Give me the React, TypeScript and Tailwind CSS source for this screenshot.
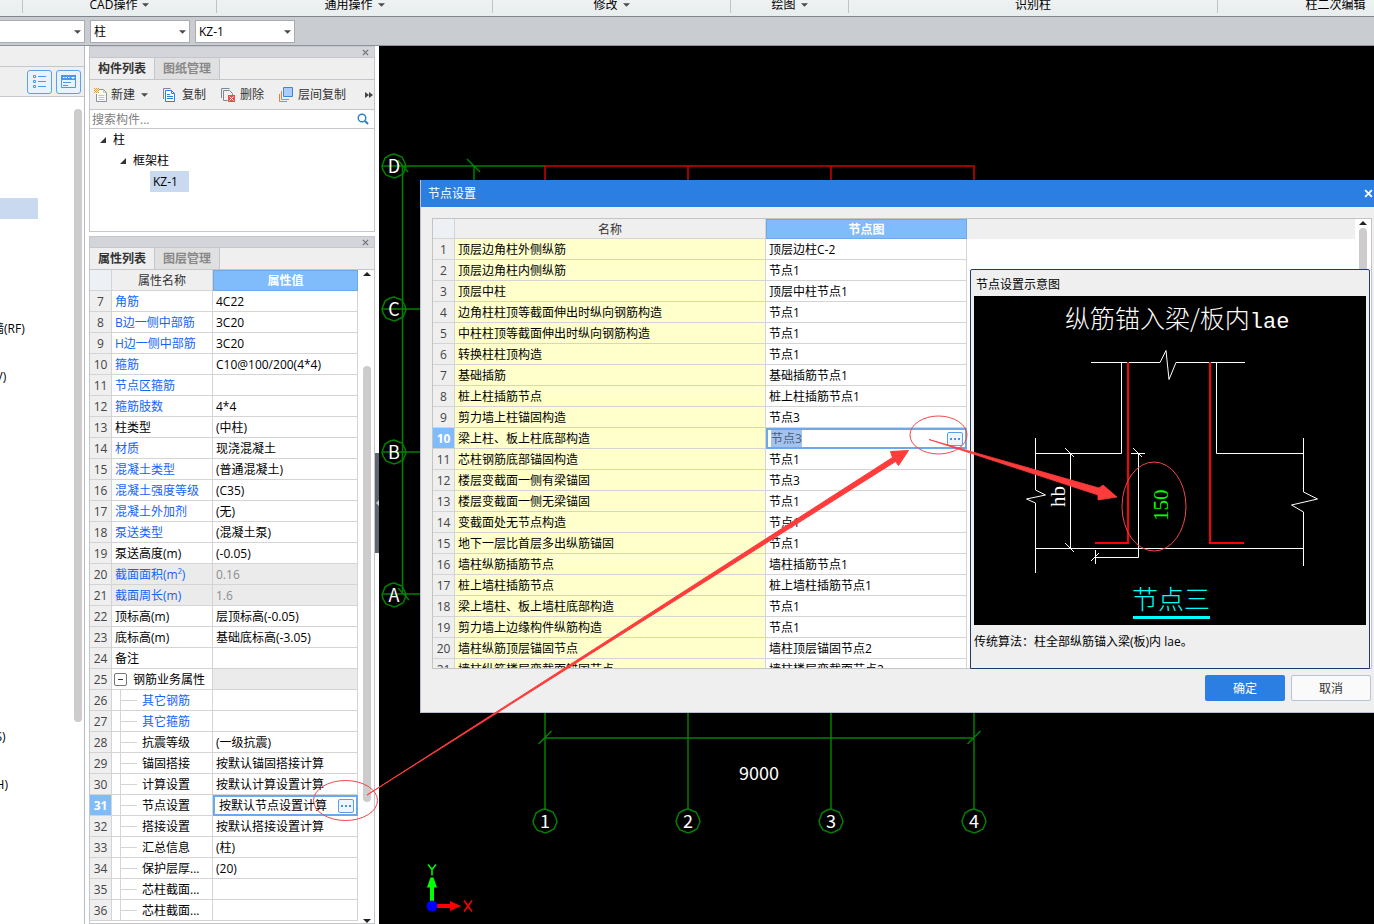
import { ReactNode } from 'react';

type PropRow = {
  no: number;
  name: string;
  value?: string;
  link?: boolean;
  disabled?: boolean;
  group?: boolean;
  child?: boolean;
};

const ribbonGroups = [
  { label: 'CAD操作', menu: true, width: 'w-[194px]' },
  { label: '通用操作', menu: true, width: 'w-[276px]' },
  { label: '修改', menu: true, width: 'w-[238px]' },
  { label: '绘图', menu: true, width: 'w-[118px]' },
  { label: '识别柱', menu: false, width: 'w-[369px]' },
  { label: '柱二次编辑', menu: false, width: 'w-[236px]' },
];

const props: PropRow[] = [
  { no: 7, name: '角筋', value: '4C22', link: true },
  { no: 8, name: 'B边一侧中部筋', value: '3C20', link: true },
  { no: 9, name: 'H边一侧中部筋', value: '3C20', link: true },
  { no: 10, name: '箍筋', value: 'C10@100/200(4*4)', link: true },
  { no: 11, name: '节点区箍筋', link: true },
  { no: 12, name: '箍筋肢数', value: '4*4', link: true },
  { no: 13, name: '柱类型', value: '(中柱)' },
  { no: 14, name: '材质', value: '现浇混凝土', link: true },
  { no: 15, name: '混凝土类型', value: '(普通混凝土)', link: true },
  { no: 16, name: '混凝土强度等级', value: '(C35)', link: true },
  { no: 17, name: '混凝土外加剂', value: '(无)', link: true },
  { no: 18, name: '泵送类型', value: '(混凝土泵)', link: true },
  { no: 19, name: '泵送高度(m)', value: '(-0.05)' },
  { no: 20, name: '截面面积(m²)', value: '0.16', link: true, disabled: true },
  { no: 21, name: '截面周长(m)', value: '1.6', link: true, disabled: true },
  { no: 22, name: '顶标高(m)', value: '层顶标高(-0.05)' },
  { no: 23, name: '底标高(m)', value: '基础底标高(-3.05)' },
  { no: 24, name: '备注' },
  { no: 25, name: '钢筋业务属性', group: true },
  { no: 26, name: '其它钢筋', link: true, child: true },
  { no: 27, name: '其它箍筋', link: true, child: true },
  { no: 28, name: '抗震等级', value: '(一级抗震)', child: true },
  { no: 29, name: '锚固搭接', value: '按默认锚固搭接计算', child: true },
  { no: 30, name: '计算设置', value: '按默认计算设置计算', child: true },
  { no: 31, name: '节点设置', value: '按默认节点设置计算', child: true },
  { no: 32, name: '搭接设置', value: '按默认搭接设置计算', child: true },
  { no: 33, name: '汇总信息', value: '(柱)', child: true },
  { no: 34, name: '保护层厚...', value: '(20)', child: true },
  { no: 35, name: '芯柱截面...', child: true },
  { no: 36, name: '芯柱截面...', child: true },
];

const nodes = [
  ['顶层边角柱外侧纵筋', '顶层边柱C-2'],
  ['顶层边角柱内侧纵筋', '节点1'],
  ['顶层中柱', '顶层中柱节点1'],
  ['边角柱柱顶等截面伸出时纵向钢筋构造', '节点1'],
  ['中柱柱顶等截面伸出时纵向钢筋构造', '节点1'],
  ['转换柱柱顶构造', '节点1'],
  ['基础插筋', '基础插筋节点1'],
  ['桩上柱插筋节点', '桩上柱插筋节点1'],
  ['剪力墙上柱锚固构造', '节点3'],
  ['梁上柱、板上柱底部构造', '节点3'],
  ['芯柱钢筋底部锚固构造', '节点1'],
  ['楼层变截面一侧有梁锚固', '节点3'],
  ['楼层变截面一侧无梁锚固', '节点1'],
  ['变截面处无节点构造', '节点1'],
  ['地下一层比首层多出纵筋锚固', '节点1'],
  ['墙柱纵筋插筋节点', '墙柱插筋节点1'],
  ['桩上墙柱插筋节点', '桩上墙柱插筋节点1'],
  ['梁上墙柱、板上墙柱底部构造', '节点1'],
  ['剪力墙上边缘构件纵筋构造', '节点1'],
  ['墙柱纵筋顶层锚固节点', '墙柱顶层锚固节点2'],
  ['墙柱纵筋楼层变截面锚固节点', '墙柱楼层变截面节点2'],
];

// 24px rows, only the tail of each label fits in the collapsed navigator
const navTails: Record<number, string> = {
  9: '墙(RF)',
  11: '(V)',
  26: '(S)',
  28: '(H)',
};

const Caret = ({ className = '' }: { className?: string }) => (
  <svg viewBox="0 0 8 4" className={`w-[7px] h-1 shrink-0 ${className}`}>
    <path d="M0 0h8L4 4z" fill="#4a4a4a" />
  </svg>
);

const Close = ({ color, className }: { color: string; className: string }) => (
  <svg viewBox="0 0 8 8" className={className}>
    <path d="M1 1l6 6M7 1L1 7" stroke={color} strokeWidth="1.6" />
  </svg>
);

const Combo = ({ label, value, className }: { label: string; value: string; className: string }) => (
  <div className={`relative h-[23px] shrink-0 ${className}`}>
    <select
      aria-label={label}
      className="w-full h-full pl-[3px] pt-[2px] appearance-none border border-[#a9abb0] bg-white text-xs text-black"
    >
      <option>{value}</option>
    </select>
    <Caret className="absolute right-1 top-[10px] pointer-events-none" />
  </div>
);

const Ellipsis = () => (
  <button
    aria-label="更多"
    className="flex items-center justify-center w-4 h-[14px] shrink-0 rounded-xs border border-[#5b9fe0] bg-[#eef5fd]"
  >
    <svg viewBox="0 0 10 2" className="w-[10px] h-[2px]">
      <path d="M0 0h2v2H0zM4 0h2v2H4zM8 0h2v2H8z" fill="#4a93dc" />
    </svg>
  </button>
);

const PanelHead = ({ tabs }: { tabs: string[] }) => (
  <>
    <div className="flex items-center justify-end h-[11px] pr-[5px] bg-[#d3d5da] border-b border-[#c3c6cb]">
      <button aria-label="关闭" className="flex">
        <Close color="#777" className="w-[7px] h-[7px]" />
      </button>
    </div>
    <div className="flex h-[22px] bg-[#efefef] border-b border-[#c3c6cb]">
      <button className="w-[65px] pt-px font-bold text-[#333] border-r border-[#c3c6cb]">{tabs[0]}</button>
      <button className="w-[65px] pt-px font-bold text-[#888] bg-[#e0e0e0] border-r border-[#c3c6cb]">{tabs[1]}</button>
    </div>
  </>
);

const Tool = ({ label, children }: { label: string; children: ReactNode }) => (
  <button className="flex items-center gap-1 text-[#333] whitespace-nowrap">
    <svg viewBox="0 0 16 16" className="w-4 h-4" fill="none">
      {children}
    </svg>
    {label}
  </button>
);

function Navigator() {
  return (
    <aside className="flex flex-col w-[85px] shrink-0 overflow-hidden bg-white border-r border-[#b8bbc2]">
      <div className="h-[21px] shrink-0 bg-[#efefef] border-b border-[#c3c6cb]" />
      <div className="flex items-center justify-end gap-1 h-[30px] pr-[3px] shrink-0 bg-[#efefef] border-b border-[#c3c6cb]">
        <button aria-label="列表" className="w-[25px] h-6 rounded-[3px] border border-[#5aa2f0] bg-[#e9f3fe]">
          <svg viewBox="0 0 23 22" className="w-full h-full" fill="none" stroke="#4a98ec">
            <path d="M5.500 4.500h2v2h-2zM5.500 9.500h2v2h-2zM5.500 14.500h2v2h-2zM10 5.500h8M10 10.500h8M10 15.500h8" />
          </svg>
        </button>
        <button aria-label="视图" className="w-[25px] h-6 rounded-[3px] border border-[#5aa2f0] bg-[#e9f3fe]">
          <svg viewBox="0 0 23 22" className="w-full h-full" fill="none" stroke="#4a98ec">
            <path d="M4.500 4.500h14v12h-14z" />
            <path d="M4 4h15v5H4z" fill="#4a98ec" stroke="none" />
            <path d="M6 6.500h1.500M8.500 6.500H10M11 6.500h1.500" stroke="#fff" />
            <path d="M14 6h4l-2 2z" fill="#fff" stroke="none" />
            <path d="M6 11.500h8M6 14.500h5" />
          </svg>
        </button>
      </div>
      <div className="flex flex-1 justify-between pt-[3px]">
        <ul className="w-[38px]">
          {Array.from({ length: 30 }, (_, i) => (
            <li key={i} className="flex items-center h-6">
              {i === 4 ? (
                <span className="w-full h-[21px] bg-[#c9d9f0]" />
              ) : (
                <span className="pt-px -ml-2 whitespace-nowrap">{navTails[i]}</span>
              )}
            </li>
          ))}
        </ul>
        <div className="w-2 h-[613px] mt-[9px] mr-[2px] rounded-full bg-[#cdcbcc]" />
      </div>
    </aside>
  );
}

function ComponentList() {
  return (
    <section className="h-[186px] shrink-0 bg-white border border-[#c3c6cb]">
      <PanelHead tabs={['构件列表', '图纸管理']} />
      <div className="flex items-center gap-[14px] h-[30px] px-px bg-[#efefef] border-b border-[#c3c6cb]">
        <div className="flex items-center gap-[6px]">
          <Tool label="新建">
            <g transform="translate(2 0)">
              <path d="M3.500 7v7.500h10v-9l-3-3H6" fill="#fafafa" stroke="#8a929c" />
              <path d="M10.500 2.500v3h3M5.500 8.500h6M5.500 10.500h6M5.500 12.500h6" stroke="#c0c4ca" />
              <path d="M1 1h1v1H1zM3 1h1v1H3zM5 1h1v1H5zM2 2h1v1H2zM4 2h1v1H4zM1 3h1v1H1zM3 3h1v1H3zM5 3h1v1H5zM2 4h1v1H2zM4 4h1v1H4zM1 5h1v1H1zM3 5h1v1H3zM5 5h1v1H5z" fill="#f09a12" />
            </g>
          </Tool>
          <Caret />
        </div>
        <Tool label="复制">
          <path d="M1.500 12V1.500h7" stroke="#7d8894" />
          <path d="M3.500 3.500h6l3 3v8h-9z" fill="#fff" stroke="#2f7fe0" />
          <path d="M9.500 3.500v3h3M5 7.500h3M5 9.500h6M5 11.500h6" stroke="#2f7fe0" />
        </Tool>
        <Tool label="删除">
          <path d="M1.500 11V1.500h8M3.500 13.500v-10h6l3 3v2M3.500 13.500h4" stroke="#7d8894" />
          <path d="M8 8h7v7H8z" fill="#d9534f" />
          <path d="M9.500 9.500l4 4M13.500 9.500l-4 4" stroke="#fff" />
        </Tool>
        <Tool label="层间复制">
          <path d="M5.500 .5h9v9h-9z" fill="#a9cdf8" stroke="#3f86dc" />
          <path d="M3.500 4v8.500H11M1.500 7v7.500H9" stroke="#ee7f2d" />
        </Tool>
        <button aria-label="更多" className="ml-auto">
          <svg viewBox="0 0 8 6" className="w-2 h-[6px]">
            <path d="M0 0l4 3-4 3zM4 0l4 3-4 3z" fill="#444" />
          </svg>
        </button>
      </div>
      <label className="flex items-center h-[19px] pl-[2px] pr-[5px] border-b border-[#c3c6cb]">
        <input
          type="text"
          placeholder="搜索构件..."
          className="flex-1 min-w-0 pt-[2px] outline-none placeholder:text-[#808080]"
        />
        <svg viewBox="0 0 12 12" className="w-3 h-3" fill="none" stroke="#2b7fc4">
          <circle cx="5" cy="5" r="3.800" strokeWidth="1.400" />
          <path d="M8 8l3 3" strokeWidth="2" />
        </svg>
      </label>
      <ul>
        <li className="flex items-center h-[21px] pl-[10px] gap-[7px]">
          <svg viewBox="0 0 6 6" className="w-[6px] h-[6px]">
            <path d="M6 0v6H0z" fill="#333" />
          </svg>
          柱
        </li>
        <li className="flex items-center h-[21px] pl-[30px] gap-[7px]">
          <svg viewBox="0 0 6 6" className="w-[6px] h-[6px]">
            <path d="M6 0v6H0z" fill="#333" />
          </svg>
          框架柱
        </li>
        <li className="flex h-[21px] pl-[60px]">
          <span className="w-[39px] pl-[3px] leading-[22px] bg-[#c9d9f0]">KZ-1</span>
        </li>
      </ul>
    </section>
  );
}

const PropName = ({ row }: { row: PropRow }) => {
  if (row.group) {
    return (
      <div className="flex items-center gap-[6px] pl-[2px]">
        <button
          aria-label="折叠"
          className="flex items-center justify-center w-[13px] h-[13px] rounded-xs border border-[#777] bg-white"
        >
          <span className="w-[5px] h-px bg-[#333]" />
        </button>
        <span className="pt-[2px]">{row.name}</span>
      </div>
    );
  }
  if (row.child) {
    return (
      <div className="flex items-center h-5 ml-2 border-l border-[#d4d4d4]">
        <span className="w-4 h-px mr-[5px] bg-[#d4d4d4]" />
        <span className="pt-[2px]">{row.name}</span>
      </div>
    );
  }
  return <div className="pl-[3px] pt-[2px]">{row.name}</div>;
};

function PropertyList() {
  return (
    <section className="flex flex-col flex-1 min-h-0 mt-1 bg-white border border-[#c3c6cb]">
      <PanelHead tabs={['属性列表', '图层管理']} />
      <div className="flex flex-1 min-h-0 overflow-hidden">
        <table className="w-[268px] shrink-0 table-fixed border-separate border-spacing-0 self-start">
          <thead>
            <tr className="h-[21px]">
              <th className="w-[22px] p-0 bg-[#edf1f6] border-r border-b border-[#d4d4d4]" />
              <th className="w-[101px] p-0 pt-[2px] font-normal text-[#333] bg-[#efefef] border-r border-b border-[#d4d4d4]">
                属性名称
              </th>
              <th className="p-0 pt-px font-bold text-white bg-[#80bbfb] border border-[#6ba9ea]">属性值</th>
            </tr>
          </thead>
          <tbody>
            {props.map((row) => {
              const active = row.no === 31;
              const grey = row.disabled || row.group;
              return (
                <tr key={row.no} className="h-[21px] whitespace-nowrap">
                  <td
                    className={`p-0 pt-[2px] text-center border-r border-b border-[#d4d4d4] ${
                      active ? 'bg-[#80bbfb] text-white font-bold' : 'bg-[#efefef] text-[#444]'
                    }`}
                  >
                    {row.no}
                  </td>
                  <td
                    className={`p-0 border-r border-b border-[#d4d4d4] overflow-hidden ${
                      row.disabled ? 'bg-[#ebebeb]' : ''
                    } ${row.link ? 'text-[#1464f6]' : ''}`}
                  >
                    <PropName row={row} />
                  </td>
                  {active ? (
                    <td className="p-0 border-2 border-[#6ba9ea]">
                      <div className="flex items-center justify-between h-[17px] pl-1 pr-[2px]">
                        {row.value}
                        <Ellipsis />
                      </div>
                    </td>
                  ) : (
                    <td
                      className={`p-0 pt-[2px] pl-[3px] border-r border-b border-[#d4d4d4] ${
                        grey ? 'bg-[#ebebeb] text-[#8c8c8c]' : ''
                      }`}
                    >
                      {row.value}
                    </td>
                  )}
                </tr>
              );
            })}
          </tbody>
        </table>
        <div className="flex flex-col flex-1 items-center pt-[2px] pl-[2px]">
          <svg viewBox="0 0 8 4" className="w-2 h-1">
            <path d="M0 4h8L4 0z" fill="#222" />
          </svg>
          <div className="w-2 h-[436px] mt-[90px] rounded-full bg-[#cdcbcc]" />
          <svg viewBox="0 0 8 4" className="w-2 h-1 mt-auto">
            <path d="M0 0h8L4 4z" fill="#222" />
          </svg>
        </div>
      </div>
    </section>
  );
}

// axis grid, numbered bubbles and the UCS icon
const bubble = '0,-12 8,-9 11,-3 12,1 9,8 3,11 0,12 -8,9 -11,4 -12,0 -9,-8 -4,-11';

const GridDrawing = () => (
  <svg
    viewBox="379 46 995 878"
    className="absolute top-0 left-0 w-[995px] h-[878px]"
    fill="none"
    stroke="#008000"
    strokeWidth="1.500"
    fontFamily="'Noto Sans CJK SC', sans-serif"
    textAnchor="middle"
  >
    <path d="M382 166H545M402.500 166V594M474 166v20M467 159l13 13M398 160l10 12M405 309h16M405 452h16M405 594h16" />
    <path d="M545 712v97M688 712v97M831 712v97M974 712v97M545 738H974M538.500 744l13-13M967.500 744l13-13" />
    <path d="M382 309h24M382 452h24M382 594h24M398 588l11 12" />
    <path d="M545 181v-15H974v15M688 166v15M831 166v15" stroke="#d40000" />
    {['D', 'C', 'B', 'A'].map((label, i) => (
      <g key={label} transform={`translate(394 ${166 + i * 143})`}>
        <polygon points={bubble} />
        <text y="7" fontSize="18" fill="#fff" stroke="none">
          {label}
        </text>
      </g>
    ))}
    {[1, 2, 3, 4].map((label, i) => (
      <g key={label} transform={`translate(${545 + i * 143} 821)`}>
        <polygon points={bubble} />
        <text y="7" fontSize="18" fill="#fff" stroke="none">
          {label}
        </text>
      </g>
    ))}
    <text x="759" y="780" fontSize="18" fill="#fff" stroke="none">
      9000
    </text>
    <path d="M432 903v-16" stroke="#0f0" strokeWidth="4" />
    <path d="M427 887.500l3.500-10h3l3.500 10z" fill="#0f0" stroke="none" />
    <path d="M435 906h16" stroke="#f00" strokeWidth="4" />
    <path d="M450 901l11 5-11 5z" fill="#f00" stroke="none" />
    <circle cx="432" cy="906" r="5.500" fill="#00f" stroke="none" />
    <path d="M428 864.500l4 5v6M436 864.500l-4 5" stroke="#0f0" />
    <path d="M464 900.500l8 11M472 900.500l-8 11" stroke="#f00" />
  </svg>
);

// section of the column anchored into the beam
const NodeDrawing = () => (
  <svg
    viewBox="974 296 392 329"
    className="w-full h-[329px] bg-black"
    fill="none"
    stroke="#fff"
    fontFamily="'Noto Sans CJK SC', sans-serif"
  >
    <text x="1065" y="328" fontSize="25" fontWeight="300" fill="#fff" stroke="none">
      纵筋锚入梁/板内
      <tspan fontFamily="'Liberation Mono', monospace" fontSize="22">
        lae
      </tspan>
    </text>
    <path d="M1091 362.500h69l6-12 3 29 7-17h69" />
    <path d="M1121.500 362v91.500h-86M1216.500 362v91.500h87M1035.500 548.500h268" />
    <path d="M1035.500 438v52l10 5-19 4 9 4v70M1303.500 438v54l14 7-26 6 12 7v54" />
    <path d="M1070.500 453v96M1065 448l9 9M1065 543l9 9M1131 453.500h14M1133 448l9 9M1138.500 453v104.500h-43M1095.500 550v14M1091 561l8-8" />
    <path d="M1128 362v181h-33M1210 362v181h34" stroke="#f00" strokeWidth="2" />
    <text transform="translate(1065 507) rotate(-90)" fontFamily="'Liberation Serif', serif" fontSize="21" fill="#fff" stroke="none">
      hb
    </text>
    <text transform="translate(1168 521) rotate(-90)" fontFamily="'Liberation Serif', serif" fontSize="21" fill="#0f0" stroke="none">
      150
    </text>
    <text x="1132" y="609" fontSize="26" fontWeight="300" fill="#0ff" stroke="none">
      节点三
    </text>
    <path d="M1133 617.500h77" stroke="#0ff" strokeWidth="3" />
  </svg>
);

function NodeDialog() {
  return (
    <div
      role="dialog"
      aria-label="节点设置"
      className="absolute top-[134px] left-[41px] right-0 bg-[#efefef] border-l border-b border-[#b9bfd0]"
    >
      <div className="flex items-center justify-between h-[27px] pl-[7px] pr-px text-white bg-[#2c7fe2]">
        节点设置
        <button aria-label="关闭">
          <Close color="#fff" className="w-[9px] h-[9px]" />
        </button>
      </div>
      <div className="relative mt-[11px] ml-[11px] mr-[2px]">
        <div className="flex h-[451px] overflow-hidden bg-white border border-[#c4c4c4]">
          <table className="w-[534px] shrink-0 table-fixed self-start border-separate border-spacing-0">
            <thead>
              <tr className="h-5">
                <th className="w-[22px] p-0 bg-[#edf1f6] border-r border-b border-[#d4d4d4]" />
                <th className="w-[311px] p-0 pt-[2px] font-normal text-[#333] bg-[#efefef] border-r border-b border-[#d4d4d4]">
                  名称
                </th>
                <th className="p-0 pt-[2px] font-bold text-white bg-[#80bbfb] border border-[#6ba9ea]">节点图</th>
              </tr>
            </thead>
            <tbody>
              {nodes.map(([name, value], i) => {
                const active = i === 9;
                return (
                  <tr key={name} className="h-[21px] whitespace-nowrap">
                    <td
                      className={`p-0 pt-[2px] text-center border-r border-b border-[#d4d4d4] ${
                        active ? 'bg-[#80bbfb] text-white font-bold' : 'bg-[#efefef] text-[#444]'
                      }`}
                    >
                      {i + 1}
                    </td>
                    <td className="p-0 pt-[2px] pl-[3px] bg-[#ffffcc] border-r border-b border-[#d4d4d4]">{name}</td>
                    {active ? (
                      <td className="p-0 border-2 border-[#6ba9ea]">
                        <div className="flex items-center justify-between h-[17px] pl-[3px] pr-[2px]">
                          <span className="leading-[17px] bg-[#a3c3ee] text-[#4c5f7c]">{value}</span>
                          <Ellipsis />
                        </div>
                      </td>
                    ) : (
                      <td className="p-0 pt-[2px] pl-[3px] border-r border-b border-[#d4d4d4]">{value}</td>
                    )}
                  </tr>
                );
              })}
            </tbody>
          </table>
          <div className="flex-1 h-5 bg-[#efefef]" />
          <div className="flex flex-col items-center w-4 pt-[2px]">
            <svg viewBox="0 0 8 4" className="w-2 h-1">
              <path d="M0 4h8L4 0z" fill="#222" />
            </svg>
            <div className="w-2 h-20 mt-[3px] rounded-full bg-[#cdcbcc]" />
          </div>
        </div>
        <div className="absolute top-[51px] right-[2px] bottom-0 w-[400px] px-[3px] rounded-t-xs bg-[#efefef] border border-[#1f3b6e]">
          <p className="h-[26px] pl-[2px] pt-px leading-7">节点设置示意图</p>
          <NodeDrawing />
          <p className="pt-px leading-8">传统算法：柱全部纵筋锚入梁(板)内 lae。</p>
        </div>
      </div>
      <div className="flex justify-end gap-[6px] mt-[6px] mb-[11px] mr-[3px]">
        <button className="w-20 h-[26px] pt-[2px] rounded-xs text-white bg-[#2c7fe2]">确定</button>
        <button className="w-20 h-[26px] pt-[2px] rounded-xs text-[#333] bg-[#fafafa] border border-[#b9c3d6]">取消</button>
      </div>
    </div>
  );
}

const Markup = () => (
  <svg
    viewBox="0 0 1374 924"
    className="absolute top-0 left-0 w-[1374px] h-[924px] pointer-events-none"
    fill="none"
    stroke="#f0484a"
  >
    <ellipse cx="345.500" cy="800.500" rx="32" ry="20" />
    <ellipse cx="938.500" cy="435" rx="28.500" ry="19" />
    <ellipse cx="1154" cy="506.500" rx="32" ry="44.500" />
    <path d="M367 795L892.500 457.500l-2-6 18-1-10 15-3-4z" fill="#ff3b3b" stroke="#ff3b3b" />
    <path d="M929 439.500L1099 488l4-3 14 12-19 3v-5z" fill="#ff3b3b" stroke="#ff3b3b" strokeWidth="0.800" />
  </svg>
);

export default function App() {
  return (
    <div className="relative flex flex-col h-screen overflow-hidden bg-white text-xs text-black font-['Open_Sans','Noto_Sans_CJK_SC',sans-serif]">
      <nav className="flex h-[17px] pl-[22px] shrink-0 overflow-hidden bg-linear-to-b from-[#eff2f3] to-[#e8eded] border-b border-[#83878c]">
        {ribbonGroups.map((g) => (
          <div key={g.label} className={`shrink-0 h-[13px] border-l border-[#c0c4c8] ${g.width}`}>
            <button className="flex items-center justify-center gap-[5px] w-full h-[10px] leading-[10px]">
              {g.label}
              {g.menu && <Caret />}
            </button>
          </div>
        ))}
      </nav>
      <div className="flex items-center gap-[5px] h-[29px] shrink-0 bg-[#c9ccd1] border-b border-[#909399]">
        <Combo label="楼层" value="主" className="w-[101px] -ml-4" />
        <Combo label="构件类型" value="柱" className="w-[100px]" />
        <Combo label="构件" value="KZ-1" className="w-[100px]" />
      </div>
      <main className="flex flex-1 min-h-0">
        <Navigator />
        <div className="flex flex-col w-[286px] ml-1 shrink-0">
          <ComponentList />
          <PropertyList />
        </div>
        <div className="flex items-start w-1 shrink-0">
          <div className="flex items-center w-1 h-[100px] mt-[407px] bg-[#5d6671]">
            <svg viewBox="0 0 4 6" className="w-1 h-[6px]">
              <path d="M4 0v6L1 3z" fill="#c9ccd1" />
            </svg>
          </div>
        </div>
        <section className="relative flex-1 overflow-hidden bg-black">
          <GridDrawing />
          <NodeDialog />
        </section>
      </main>
      <Markup />
    </div>
  );
}
